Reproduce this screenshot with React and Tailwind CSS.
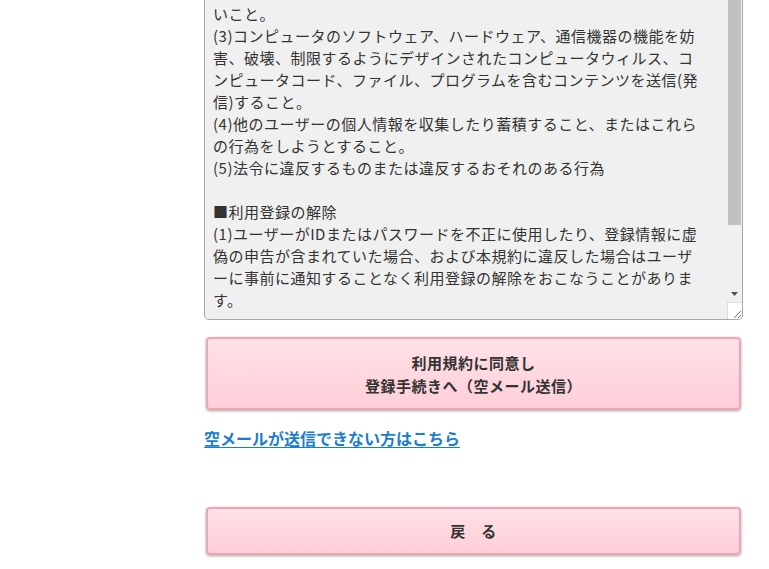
import React from "react";

const lines = [
    "いこと。",
    "(3)コンピュータのソフトウェア、ハードウェア、通信機器の機能を妨",
    "害、破壊、制限するようにデザインされたコンピュータウィルス、コ",
    "ンピュータコード、ファイル、プログラムを含むコンテンツを送信(発",
    "信)すること。",
    "(4)他のユーザーの個人情報を収集したり蓄積すること、またはこれら",
    "の行為をしようとすること。",
    "(5)法令に違反するものまたは違反するおそれのある行為",
    "",
    "■利用登録の解除",
    "(1)ユーザーがIDまたはパスワードを不正に使用したり、登録情報に虚",
    "偽の申告が含まれていた場合、および本規約に違反した場合はユーザ",
    "ーに事前に通知することなく利用登録の解除をおこなうことがありま",
    "す。"
];

const font = { fontFamily: '"Noto Sans CJK JP", "Noto Sans", sans-serif' };

function PinkButton({ children, className }) {
    return (
        <button
            type="button"
            className={`mx-[2px] w-[535px] flex flex-col items-center justify-center rounded-[4px] border-2 border-[#f0a3b1] bg-gradient-to-b from-[#ffe1e7] to-[#ffcfd8] font-bold text-[15px] tracking-[0.5px] text-[#333] shadow-[0_1px_3px_rgba(0,0,0,0.35)] ${className}`}
        >
            {children}
        </button>
    );
}

export default function App() {
    return (
        <div className="w-[769px] h-[569px] overflow-hidden bg-white pl-[204px]" style={font}>
            {/* 規約テキストエリア（スクロール途中） */}
            <div className="w-[539px] h-[320px] flex border-x border-b border-[#a6a6a6] rounded-b-[5px] bg-[#f0f0f0] overflow-hidden">
                <div className="flex-1 pl-[8px] pt-[3px] text-[15px] leading-[22px] tracking-[0.5px] text-[#333] overflow-hidden">
                    {lines.map((l, i) => (
                        <div key={i} className="h-[22px] whitespace-nowrap">{l}</div>
                    ))}
                </div>
                <div className="w-[15px] flex flex-col bg-[#f0f0f0]">
                    <div className="h-[225px] w-[13px] ml-[1px] bg-[#c1c1c1]" />
                    <div className="flex-1" />
                    <div className="h-[17px] flex items-center justify-center">
                        <svg width="7" height="4" viewBox="0 0 7 4">
                            <path d="M0 0h7L3.5 4z" fill="#505050" />
                        </svg>
                    </div>
                    <div className="h-[17px] bg-white border-t border-l border-[#dcdcdc] flex items-end justify-end">
                        <svg width="10" height="10" viewBox="0 0 10 10">
                            <path d="M9 2L2 9M9 6L6 9" stroke="#777" strokeWidth="1" />
                        </svg>
                    </div>
                </div>
            </div>

            <PinkButton className="mt-[17px] h-[73px] leading-[23px]">
                <span>利用規約に同意し</span>
                <span>登録手続きへ（空メール送信）</span>
            </PinkButton>

            <div className="mt-[16px] leading-[24px]">
                <a href="#" className="text-[16px] font-bold text-[#1a7dd1] underline underline-offset-2">
                    空メールが送信できない方はこちら
                </a>
            </div>

            <PinkButton className="mt-[57px] h-[48px]">
                <span>戻　る</span>
            </PinkButton>
        </div>
    );
}
